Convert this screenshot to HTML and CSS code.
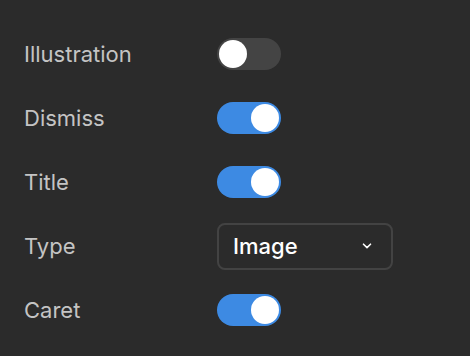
FILE: index.html
```html
<!DOCTYPE html>
<html lang="en">
<head>
    <meta charset="UTF-8">
    <meta name="viewport" content="width=device-width, initial-scale=1.0">
    <title>Settings</title>
    <link rel="stylesheet" href="styles.css">
</head>
<body>
    <div class="panel">
        <div class="row">
            <span class="label">Illustration</span>
            <span class="toggle"><span class="knob"></span></span>
        </div>
        <div class="row">
            <span class="label">Dismiss</span>
            <span class="toggle on"><span class="knob"></span></span>
        </div>
        <div class="row">
            <span class="label">Title</span>
            <span class="toggle on"><span class="knob"></span></span>
        </div>
        <div class="row">
            <span class="label">Type</span>
            <div class="select">
                <span>Image</span>
                <svg class="chevron" width="10" height="6" viewBox="0 0 10 6">
                    <path d="M1.5 1.2 L5 4.6 L8.5 1.2" fill="none" stroke="#fff" stroke-width="1.6" stroke-linecap="round" stroke-linejoin="round"/>
                </svg>
            </div>
        </div>
        <div class="row">
            <span class="label">Caret</span>
            <span class="toggle on"><span class="knob"></span></span>
        </div>
    </div>
</body>
</html>
```

FILE: styles.css
```css
body {
    margin: 0;
    padding: 0;
    background-color: #2b2b2b;
    font-family: Inter, "Noto Sans", sans-serif;
    height: 356px;
    overflow: hidden;
}

.panel {
    padding: 22px 24px 0;
    display: flex;
    flex-direction: column;
}

.row {
    display: grid;
    grid-template-columns: 193px auto;
    align-items: center;
    height: 64px;
}

.label {
    font-size: 22px;
    color: #c4c4c4;
}

.toggle {
    width: 64px;
    height: 32px;
    border-radius: 16px;
    background-color: #444444;
    display: flex;
    align-items: center;
    padding: 0 2px;
    box-sizing: border-box;
}

.toggle.on {
    background-color: #3d8ae3;
    justify-content: flex-end;
}

.knob {
    width: 28px;
    height: 28px;
    border-radius: 50%;
    background-color: #fff;
}

.select {
    width: 176px;
    height: 47px;
    box-sizing: border-box;
    border: 2px solid #434343;
    border-radius: 8px;
    display: flex;
    align-items: center;
    justify-content: space-between;
    padding: 0 19px 0 14px;
    font-size: 22px;
    font-weight: 500;
    color: #fff;
}

.chevron {
    display: block;
}
```
